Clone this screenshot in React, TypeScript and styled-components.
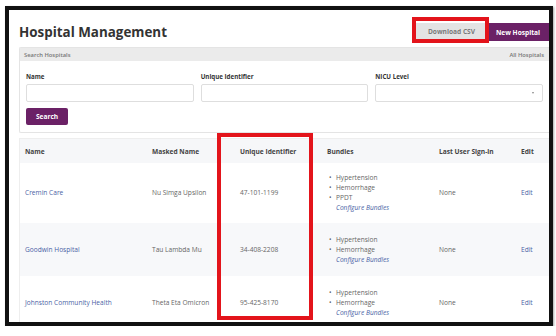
import styled, { createGlobalStyle } from "styled-components";

const GlobalStyle = createGlobalStyle`
  html, body {
    margin: 0;
    padding: 0;
    background: #ffffff;
  }
  body {
    font-family: "Open Sans", "Liberation Sans", sans-serif;
    color: #555;
  }
  * {
    box-sizing: border-box;
  }
`;

const PURPLE = "#6b2166";
const LINK = "#4a5fa5";

const Frame = styled.div`
  position: relative;
  margin: 6px 0 0 5px;
  width: 548px;
  height: 320px;
  border: 4px solid #111;
  overflow: hidden;
  padding: 13px 0 0 10px;
  background: #fff;
  box-shadow: 1px 1px 2px rgba(0, 0, 0, 0.35);
`;

const Highlight = styled.div<{ $left: number; $top: number; $w: number; $h: number }>`
  position: absolute;
  left: ${({ $left }) => $left}px;
  top: ${({ $top }) => $top}px;
  width: ${({ $w }) => $w}px;
  height: ${({ $h }) => $h}px;
  border: 4px solid #e3141b;
  pointer-events: none;
`;

const HeaderRow = styled.div`
  display: flex;
  align-items: center;
  justify-content: space-between;
  height: 18px;
`;

const Title = styled.h1`
  margin: 0;
  font-size: 13.4px;
  line-height: 18px;
  font-weight: 700;
  color: #333;
`;

const Actions = styled.div`
  display: flex;
  align-items: stretch;
  height: 18px;
`;

const Button = styled.button<{ $variant?: "grey" | "purple" }>`
  border: none;
  margin: 0;
  padding: 0 8px;
  height: ${({ $variant }) => ($variant === "grey" ? "17px" : "18px")};
  font-family: inherit;
  font-size: 6.6px;
  font-weight: 700;
  border-radius: ${({ $variant }) => ($variant === "grey" ? "0" : "2px 0 0 2px")};
  background: ${({ $variant }) => ($variant === "grey" ? "#e3e3e3" : PURPLE)};
  color: ${({ $variant }) => ($variant === "grey" ? "#7a7a7a" : "#fff")};
  cursor: pointer;
`;

const DownloadButton = styled(Button)`
  width: 71px;
`;

const NewButton = styled(Button)`
  width: 62px;
`;

const Panel = styled.section`
  margin-top: 6px;
  border: 1px solid #e4e4e4;
  border-right: none;
  border-radius: 2px 0 0 2px;
`;

const PanelHeader = styled.div`
  display: flex;
  align-items: center;
  justify-content: space-between;
  height: 13px;
  padding: 0 5px 0 4px;
  background: #ebebeb;
  font-size: 5.8px;
  font-weight: 600;
  color: #777;
`;

const PanelBody = styled.div`
  padding: 12px 6px 7px 6px;
`;

const FieldGrid = styled.div`
  display: grid;
  grid-template-columns: repeat(3, 1fr);
  gap: 7px;
`;

const Field = styled.label`
  display: flex;
  flex-direction: column;
`;

const FieldLabel = styled.span`
  font-size: 6.2px;
  line-height: 8px;
  font-weight: 700;
  color: #333;
  margin-bottom: 3px;
`;

const TextInput = styled.div`
  position: relative;
  height: 18px;
  border: 1px solid #dedede;
  border-radius: 2px;
  background: #fff;
`;

const Caret = styled.span`
  position: absolute;
  right: 8px;
  top: 7px;
  width: 0;
  height: 0;
  border-left: 1.5px solid transparent;
  border-right: 1.5px solid transparent;
  border-top: 2px solid #888;
`;

const SearchButton = styled(Button)`
  margin-top: 6px;
  width: 42px;
  height: 17px;
  border-radius: 2px;
  padding: 0;
`;

const Card = styled.div`
  margin-top: 5px;
  border: 1px solid #eeeeee;
  border-right: none;
`;

const Table = styled.table`
  width: 100%;
  border-collapse: collapse;
  table-layout: fixed;
  font-size: 6.6px;
`;

const Th = styled.th<{ $w?: number }>`
  ${({ $w }) => ($w ? `width: ${$w}px;` : "")}
  height: 24px;
  padding: 0 5px;
  text-align: left;
  font-weight: 700;
  color: #444;
  background: #f6f7f9;
`;

const Tr = styled.tr<{ $striped?: boolean }>`
  height: 53px;
  background: ${({ $striped }) => ($striped ? "#f7f8fa" : "#fff")};
`;

const Td = styled.td`
  padding: 10px 5px;
  line-height: 10px;
  color: #666;
  vertical-align: middle;
`;

const LinkText = styled.a`
  color: ${LINK};
  text-decoration: none;
`;

const BundleList = styled.ul`
  margin: 0;
  padding: 0 0 0 9px;
  list-style: none;
`;

const BundleItem = styled.li`
  position: relative;
  &::before {
    content: "•";
    position: absolute;
    left: -7px;
    color: #666;
  }
`;

const ConfigureLink = styled(LinkText)`
  display: block;
  font-style: italic;
`;

type Hospital = {
  name: string;
  masked: string;
  id: string;
  bundles: string[];
  lastSignIn: string;
};

const hospitals: Hospital[] = [
  {
    name: "Cremin Care",
    masked: "Nu Simga Upsilon",
    id: "47-101-1199",
    bundles: ["Hypertension", "Hemorrhage", "PPDT"],
    lastSignIn: "None",
  },
  {
    name: "Goodwin Hospital",
    masked: "Tau Lambda Mu",
    id: "34-408-2208",
    bundles: ["Hypertension", "Hemorrhage"],
    lastSignIn: "None",
  },
  {
    name: "Johnston Community Health",
    masked: "Theta Eta Omicron",
    id: "95-425-8170",
    bundles: ["Hypertension", "Hemorrhage"],
    lastSignIn: "None",
  },
];

const App: React.FC = () => {
  return (
    <>
      <GlobalStyle />
      <Frame>
        <HeaderRow>
          <Title>Hospital Management</Title>
          <Actions>
            <DownloadButton $variant="grey">Download CSV</DownloadButton>
            <NewButton $variant="purple">New Hospital</NewButton>
          </Actions>
        </HeaderRow>

        <Panel>
          <PanelHeader>
            <span>Search Hospitals</span>
            <span>All Hospitals</span>
          </PanelHeader>
          <PanelBody>
            <FieldGrid>
              <Field>
                <FieldLabel>Name</FieldLabel>
                <TextInput />
              </Field>
              <Field>
                <FieldLabel>Unique Identifier</FieldLabel>
                <TextInput />
              </Field>
              <Field>
                <FieldLabel>NICU Level</FieldLabel>
                <TextInput>
                  <Caret />
                </TextInput>
              </Field>
            </FieldGrid>
            <SearchButton $variant="purple">Search</SearchButton>
          </PanelBody>
        </Panel>

        <Card>
          <Table>
            <thead>
              <tr>
                <Th $w={127}>Name</Th>
                <Th $w={88}>Masked Name</Th>
                <Th $w={87}>Unique Identifier</Th>
                <Th $w={112}>Bundles</Th>
                <Th $w={82}>Last User Sign-in</Th>
                <Th>Edit</Th>
              </tr>
            </thead>
            <tbody>
              {hospitals.map((h, i) => (
                <Tr key={h.id} $striped={i % 2 === 1}>
                  <Td>
                    <LinkText href="#">{h.name}</LinkText>
                  </Td>
                  <Td>{h.masked}</Td>
                  <Td>{h.id}</Td>
                  <Td>
                    <BundleList>
                      {h.bundles.map((b) => (
                        <BundleItem key={b}>{b}</BundleItem>
                      ))}
                      <li>
                        <ConfigureLink href="#">Configure Bundles</ConfigureLink>
                      </li>
                    </BundleList>
                  </Td>
                  <Td>{h.lastSignIn}</Td>
                  <Td>
                    <LinkText href="#">Edit</LinkText>
                  </Td>
                </Tr>
              ))}
            </tbody>
          </Table>
        </Card>

        <Highlight $left={403} $top={7} $w={77} $h={26} />
        <Highlight $left={208} $top={123} $w={96} $h={187} />
      </Frame>
    </>
  );
};

export default App;
